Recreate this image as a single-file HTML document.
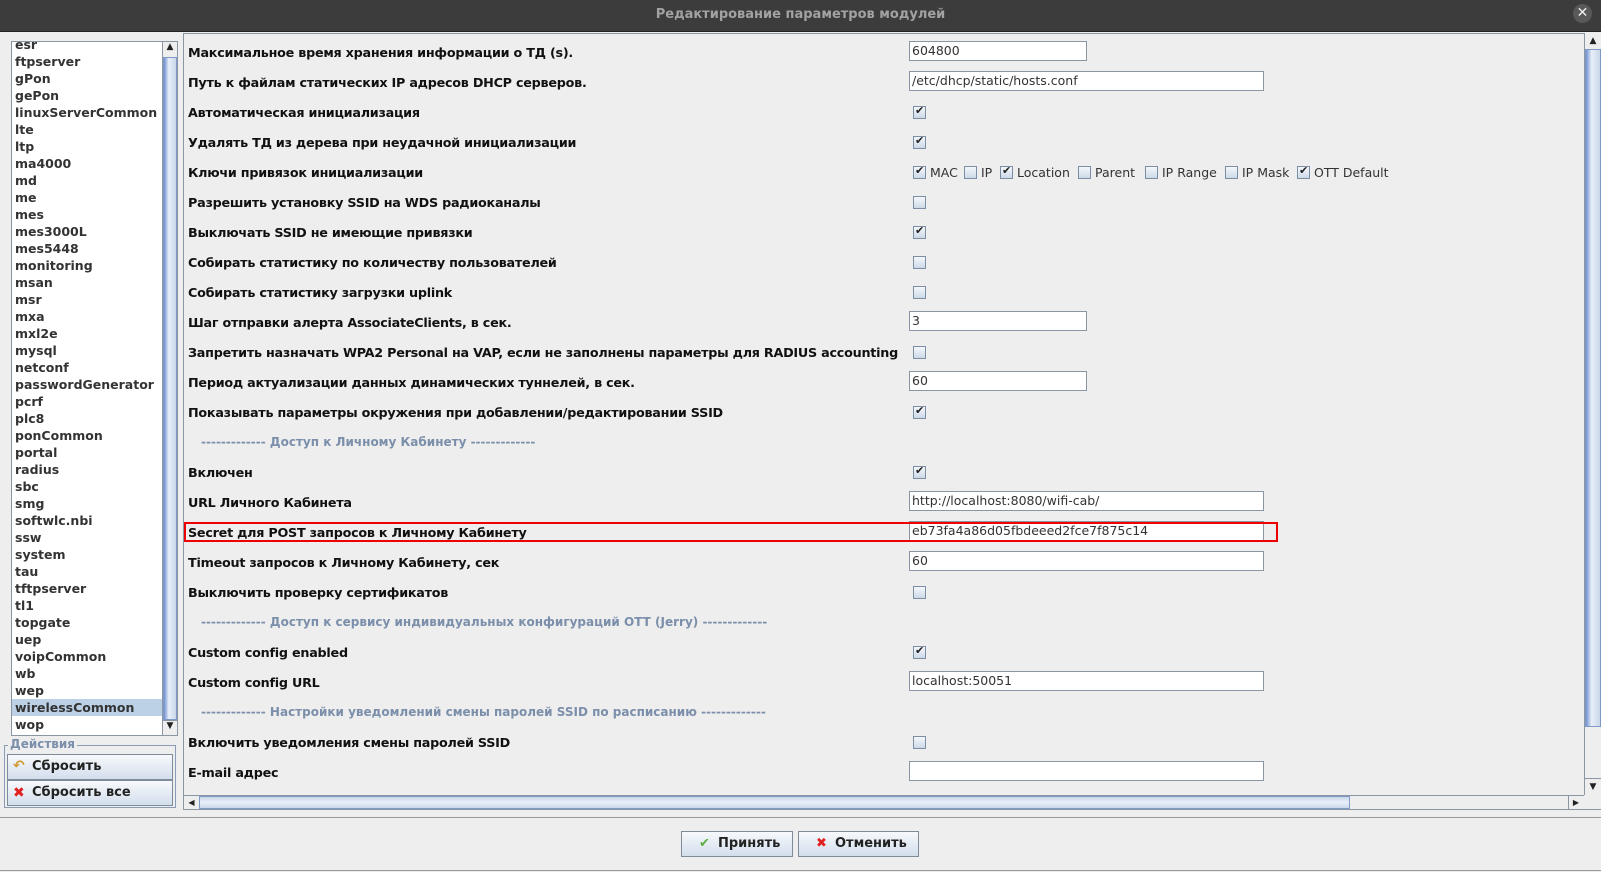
<!DOCTYPE html>
<html><head><meta charset="utf-8"><style>
*{box-sizing:border-box;margin:0;padding:0}
body{width:1601px;height:872px;background:#eeeeee;position:relative;overflow:hidden;font-family:"DejaVu Sans","Liberation Sans",sans-serif;}
.a{position:absolute}
.title{left:0;top:0;width:1601px;height:32px;background:#3c3c3c;border-bottom:1px solid #222}
.title span{position:absolute;left:0;width:1601px;top:7px;text-align:center;color:#a2a2a2;font-weight:bold;font-size:13px}
.close{left:1573px;top:4px;width:19px;height:19px;border-radius:50%;background:#595959;color:#eee;font-size:14px;text-align:center;line-height:19px}
.lbl{position:absolute;left:188px;font-size:12.75px;letter-spacing:-0.25px;font-weight:bold;color:#111;white-space:nowrap;line-height:16px;margin-top:2px}
.sec{position:absolute;left:201px;font-size:12px;font-weight:bold;color:#7b8fab;white-space:nowrap;line-height:16px}
.inp{position:absolute;left:909px;height:20px;background:#fff;border:1px solid #8a96a4;font-size:12.5px;color:#333;padding-left:2px;line-height:18px;white-space:nowrap}
.s{width:178px}.l{width:355px}
.cb{position:absolute;width:13px;height:13px;border:1px solid #7c8ea3;background:linear-gradient(#f4f7fb,#cdd9e8)}
.cb.c::after{content:"✔";position:absolute;left:1px;top:-3px;font-size:11px;color:#222}
.ct{position:absolute;font-size:12.5px;color:#333;line-height:16px}
.li{position:absolute;left:3px;font-size:12.5px;font-weight:bold;color:#333;line-height:17px;white-space:nowrap}
.btn{position:absolute;border:1px solid #7e8b99;background:linear-gradient(#f7f9fc,#d3deec);font-size:13px;font-weight:bold;color:#222;line-height:24px}
</style></head><body>
<div class="a title"><span>Редактирование параметров модулей</span></div>
<div class="a close">✕</div>

<div class="a" style="left:11px;top:41px;width:167px;height:695px;border:1px solid #8a96a4;background:#fff;overflow:hidden">
<div class="a" style="left:0;top:657px;width:150px;height:17px;background:#bcd0e6"></div>
<div class="li" style="top:-6px">esr</div>
<div class="li" style="top:11px">ftpserver</div>
<div class="li" style="top:28px">gPon</div>
<div class="li" style="top:45px">gePon</div>
<div class="li" style="top:62px">linuxServerCommon</div>
<div class="li" style="top:79px">lte</div>
<div class="li" style="top:96px">ltp</div>
<div class="li" style="top:113px">ma4000</div>
<div class="li" style="top:130px">md</div>
<div class="li" style="top:147px">me</div>
<div class="li" style="top:164px">mes</div>
<div class="li" style="top:181px">mes3000L</div>
<div class="li" style="top:198px">mes5448</div>
<div class="li" style="top:215px">monitoring</div>
<div class="li" style="top:232px">msan</div>
<div class="li" style="top:249px">msr</div>
<div class="li" style="top:266px">mxa</div>
<div class="li" style="top:283px">mxl2e</div>
<div class="li" style="top:300px">mysql</div>
<div class="li" style="top:317px">netconf</div>
<div class="li" style="top:334px">passwordGenerator</div>
<div class="li" style="top:351px">pcrf</div>
<div class="li" style="top:368px">plc8</div>
<div class="li" style="top:385px">ponCommon</div>
<div class="li" style="top:402px">portal</div>
<div class="li" style="top:419px">radius</div>
<div class="li" style="top:436px">sbc</div>
<div class="li" style="top:453px">smg</div>
<div class="li" style="top:470px">softwlc.nbi</div>
<div class="li" style="top:487px">ssw</div>
<div class="li" style="top:504px">system</div>
<div class="li" style="top:521px">tau</div>
<div class="li" style="top:538px">tftpserver</div>
<div class="li" style="top:555px">tl1</div>
<div class="li" style="top:572px">topgate</div>
<div class="li" style="top:589px">uep</div>
<div class="li" style="top:606px">voipCommon</div>
<div class="li" style="top:623px">wb</div>
<div class="li" style="top:640px">wep</div>
<div class="li" style="top:657px">wirelessCommon</div>
<div class="li" style="top:674px">wop</div>
<div class="a" style="left:150px;top:0;width:15px;height:693px;background:#eee;border-left:1px solid #8a96a4">
<div class="a" style="left:0;top:0;width:14px;height:15px;font-size:9px;text-align:center;color:#222">▲</div>
<div class="a" style="left:0;top:15px;width:14px;height:663px;background:linear-gradient(90deg,#6f8fcf,#e8eff9 40%,#c9d7ea);border:1px solid #7f99c9"></div>
<div class="a" style="left:0;top:678px;width:14px;height:15px;font-size:9px;text-align:center;color:#222;border-top:1px solid #8a96a4">▼</div>
</div>
</div>

<div class="a" style="left:4px;top:745px;width:172px;height:63px;border:1px solid #8a9bb5"></div>
<div class="a" style="left:8px;top:737px;background:#eee;font-size:12px;font-weight:bold;color:#7b8fab;padding:0 2px">Действия</div>
<div class="btn" style="left:7px;top:754px;width:166px;height:26px;padding-left:24px"><span style="position:absolute;left:5px;top:-1px;color:#d09a30;font-size:14px">↶</span>Сбросить</div>
<div class="btn" style="left:7px;top:780px;width:166px;height:26px;padding-left:24px"><span style="position:absolute;left:5px;top:0;color:#e02020;font-size:14px">✖</span>Сбросить все</div>

<div class="a" style="left:183px;top:33px;width:1418px;height:777px;border:1px solid #8a96a4;border-right:none"></div>
<div class="lbl" style="top:44px">Максимальное время хранения информации о ТД (s).</div><div class="inp s" style="top:41px">604800</div>
<div class="lbl" style="top:74px">Путь к файлам статических IP адресов DHCP серверов.</div><div class="inp l" style="top:71px">/etc/dhcp/static/hosts.conf</div>
<div class="lbl" style="top:104px">Автоматическая инициализация</div><div class="cb c" style="left:913px;top:106px"></div>
<div class="lbl" style="top:134px">Удалять ТД из дерева при неудачной инициализации</div><div class="cb c" style="left:913px;top:136px"></div>
<div class="lbl" style="top:164px">Ключи привязок инициализации</div>
<div class="cb c" style="left:913px;top:166px"></div><div class="ct" style="left:930px;top:165px">MAC</div>
<div class="cb" style="left:964px;top:166px"></div><div class="ct" style="left:981px;top:165px">IP</div>
<div class="cb c" style="left:1000px;top:166px"></div><div class="ct" style="left:1017px;top:165px">Location</div>
<div class="cb" style="left:1078px;top:166px"></div><div class="ct" style="left:1095px;top:165px">Parent</div>
<div class="cb" style="left:1145px;top:166px"></div><div class="ct" style="left:1162px;top:165px">IP Range</div>
<div class="cb" style="left:1225px;top:166px"></div><div class="ct" style="left:1242px;top:165px">IP Mask</div>
<div class="cb c" style="left:1297px;top:166px"></div><div class="ct" style="left:1314px;top:165px">OTT Default</div>
<div class="lbl" style="top:194px">Разрешить установку SSID на WDS радиоканалы</div><div class="cb" style="left:913px;top:196px"></div>
<div class="lbl" style="top:224px">Выключать SSID не имеющие привязки</div><div class="cb c" style="left:913px;top:226px"></div>
<div class="lbl" style="top:254px">Собирать статистику по количеству пользователей</div><div class="cb" style="left:913px;top:256px"></div>
<div class="lbl" style="top:284px">Собирать статистику загрузки uplink</div><div class="cb" style="left:913px;top:286px"></div>
<div class="lbl" style="top:314px">Шаг отправки алерта AssociateClients, в сек.</div><div class="inp s" style="top:311px">3</div>
<div class="lbl" style="top:344px">Запретить назначать WPA2 Personal на VAP, если не заполнены параметры для RADIUS accounting</div><div class="cb" style="left:913px;top:346px"></div>
<div class="lbl" style="top:374px">Период актуализации данных динамических туннелей, в сек.</div><div class="inp s" style="top:371px">60</div>
<div class="lbl" style="top:404px">Показывать параметры окружения при добавлении/редактировании SSID</div><div class="cb c" style="left:913px;top:406px"></div>
<div class="sec" style="top:434px">------------- Доступ к Личному Кабинету -------------</div>
<div class="lbl" style="top:464px">Включен</div><div class="cb c" style="left:913px;top:466px"></div>
<div class="lbl" style="top:494px">URL Личного Кабинета</div><div class="inp l" style="top:491px">http://localhost:8080/wifi-cab/</div>
<div class="lbl" style="top:524px">Secret для POST запросов к Личному Кабинету</div><div class="inp l" style="top:521px">eb73fa4a86d05fbdeeed2fce7f875c14</div>
<div class="a" style="left:184px;top:522px;width:1094px;height:20px;border:2px solid #ee0000"></div>
<div class="lbl" style="top:554px">Timeout запросов к Личному Кабинету, сек</div><div class="inp l" style="top:551px">60</div>
<div class="lbl" style="top:584px">Выключить проверку сертификатов</div><div class="cb" style="left:913px;top:586px"></div>
<div class="sec" style="top:614px">------------- Доступ к сервису индивидуальных конфигураций OTT (Jerry) -------------</div>
<div class="lbl" style="top:644px">Custom config enabled</div><div class="cb c" style="left:913px;top:646px"></div>
<div class="lbl" style="top:674px">Custom config URL</div><div class="inp l" style="top:671px">localhost:50051</div>
<div class="sec" style="top:704px">------------- Настройки уведомлений смены паролей SSID по расписанию -------------</div>
<div class="lbl" style="top:734px">Включить уведомления смены паролей SSID</div><div class="cb" style="left:913px;top:736px"></div>
<div class="lbl" style="top:764px">E-mail адрес</div><div class="inp l" style="top:761px"></div>

<div class="a" style="left:1584px;top:33px;width:17px;height:762px;border-left:1px solid #8a96a4;background:#eee">
<div class="a" style="left:0;top:0;width:16px;height:16px;font-size:9px;text-align:center;color:#222;line-height:16px">▲</div>
<div class="a" style="left:0;top:16px;width:16px;height:678px;background:linear-gradient(90deg,#6f8fcf,#e8eff9 40%,#c9d7ea);border:1px solid #7f99c9"></div>
<div class="a" style="left:0;top:745px;width:16px;height:16px;font-size:9px;text-align:center;color:#222;line-height:16px;border-top:1px solid #8a96a4">▼</div>
</div>
<div class="a" style="left:184px;top:795px;width:1400px;height:14px;border-top:1px solid #8a96a4;background:#eee">
<div class="a" style="left:0;top:0;width:15px;height:13px;font-size:8px;text-align:center;color:#222;line-height:13px">◀</div>
<div class="a" style="left:15px;top:0;width:1151px;height:13px;background:linear-gradient(#c9d7ea,#e8eff9 50%,#c9d7ea);border:1px solid #7f99c9"></div>
<div class="a" style="left:1384px;top:0;width:15px;height:13px;font-size:8px;text-align:center;color:#222;line-height:13px;border-left:1px solid #8a96a4">▶</div>
</div>

<div class="a" style="left:0;top:817px;width:1601px;height:1px;background:#999"></div>
<div class="a" style="left:0;top:870px;width:1601px;height:1px;background:#999"></div>
<div class="btn" style="left:681px;top:831px;width:112px;height:26px;padding-left:36px"><span style="position:absolute;left:17px;top:0;color:#5cb040">✔</span>Принять</div>
<div class="btn" style="left:798px;top:831px;width:121px;height:26px;padding-left:36px"><span style="position:absolute;left:17px;top:0;color:#e02020">✖</span>Отменить</div>
</body></html>
